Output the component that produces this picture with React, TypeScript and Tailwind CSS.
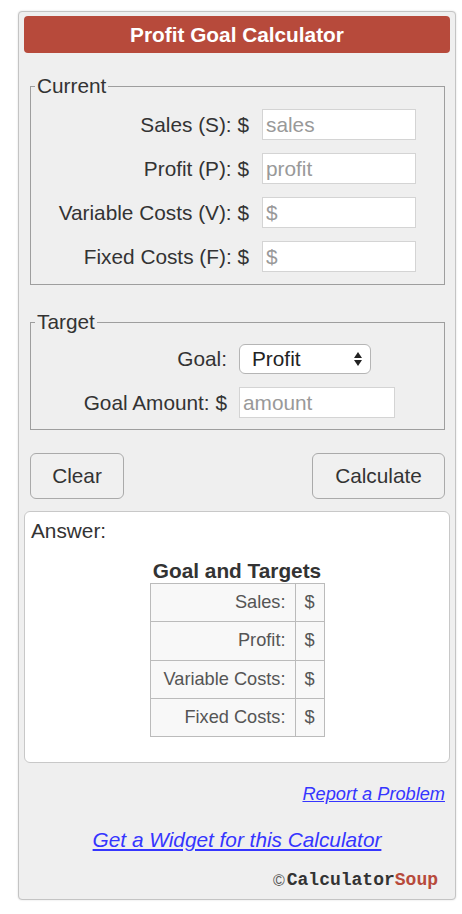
import React from "react";

const font = { fontFamily: '"Liberation Sans", Arial, Helvetica, sans-serif' };

function Row({ label, placeholder }: { label: string; placeholder: string }) {
  return (
    <>
      <label className="text-right text-[20.8px] leading-[31px] text-[#333] whitespace-nowrap">{label}</label>
      <input
        className="h-[31px] w-[154px] border border-[#d4d4d4] bg-white pl-[3px] text-[20.8px] text-[#333] placeholder:text-[#999] outline-none"
        placeholder={placeholder}
      />
    </>
  );
}

export default function App() {
  return (
    <div className="min-h-screen bg-white pt-[11px] pl-[18px]" style={font}>
      <div className="flex h-[889px] w-[438px] flex-col rounded-[4px] border border-[#c4c4c4] bg-[#efefef] px-[5px] pt-[4px] shadow-[0_0_2px_rgba(0,0,0,0.15)]">
        <div className="flex h-[37px] items-center justify-center rounded-[4px] bg-[#b74a3b] text-[20.8px] font-bold text-white">
          Profit Goal Calculator
        </div>

        <fieldset className="mx-[6px] mr-[5px] mt-[22px] border border-[#9e9e9e] pb-[12px] pl-[4px] pr-[28px]">
          <legend className="px-[2px] text-[20.8px] leading-[22px] text-[#333]">Current</legend>
          <div className="mt-[12px] grid grid-cols-[1fr_154px] items-center gap-x-[13px] gap-y-[13px]">
            <Row label="Sales (S): $" placeholder="sales" />
            <Row label="Profit (P): $" placeholder="profit" />
            <Row label="Variable Costs (V): $" placeholder="$" />
            <Row label="Fixed Costs (F): $" placeholder="$" />
          </div>
        </fieldset>

        <fieldset className="mx-[6px] mr-[5px] mt-[26px] border border-[#9e9e9e] pb-[11px] pl-[4px] pr-[49px]">
          <legend className="px-[2px] text-[20.8px] leading-[22px] text-[#333]">Target</legend>
          <div className="mt-[11px] grid grid-cols-[1fr_156px] items-center gap-x-[12px] gap-y-[13px]">
            <label className="text-right text-[20.8px] leading-[30px] text-[#333]">Goal:</label>
            <div className="flex h-[30px] w-[132px] items-center justify-between rounded-[6px] border border-[#b5b5b5] bg-white pl-[12px] pr-[8px]">
              <span className="text-[20.8px] text-[#222]">Profit</span>
              <svg width="8" height="15" viewBox="0 0 8 15">
                <path d="M4 0 L8 6 L0 6 Z" fill="#222" />
                <path d="M0 8 L8 8 L4 14 Z" fill="#222" />
              </svg>
            </div>
            <label className="text-right text-[20.8px] leading-[31px] text-[#333] whitespace-nowrap">Goal Amount: $</label>
            <input
              className="h-[31px] w-[156px] border border-[#d4d4d4] bg-white pl-[3px] text-[20.8px] text-[#333] placeholder:text-[#999] outline-none"
              placeholder="amount"
            />
          </div>
        </fieldset>

        <div className="mx-[6px] mr-[5px] mt-[23px] flex justify-between">
          <button className="h-[46px] w-[94px] rounded-[6px] border border-[#aaa] bg-[#f0f0f0] text-[20.8px] text-[#333]">
            Clear
          </button>
          <button className="h-[46px] w-[133px] rounded-[6px] border border-[#aaa] bg-[#f0f0f0] text-[20.8px] text-[#333]">
            Calculate
          </button>
        </div>

        <div className="mt-[12px] flex h-[252px] flex-col rounded-[6px] border border-[#c8c8c8] bg-white pl-[6px] pt-[8px]">
          <div className="text-[20.8px] leading-[22px] text-[#333]">Answer:</div>
          <div className="mt-[19px] flex flex-col items-center pr-[6px]">
            <div className="text-[20.8px] font-bold leading-[20px] text-[#333]">Goal and Targets</div>
            <table className="mt-[2px] border-collapse border border-[#bbb] bg-[#f8f8f8] text-[18.2px] text-[#555]">
              <tbody>
                {["Sales:", "Profit:", "Variable Costs:", "Fixed Costs:"].map((t) => (
                  <tr key={t} className="h-[38.3px]">
                    <td className="w-[145px] border border-[#bbb] pr-[9px] text-right">{t}</td>
                    <td className="w-[29px] border border-[#bbb] text-center">$</td>
                  </tr>
                ))}
              </tbody>
            </table>
          </div>
        </div>

        <div className="mr-[5px] mt-[20px] text-right">
          <a href="#" className="text-[18.2px] italic leading-[21px] text-[#3535ff] underline">
            Report a Problem
          </a>
        </div>

        <div className="mt-[21px] text-center">
          <a href="#" className="text-[20.8px] italic leading-[24px] text-[#3535ff] underline">
            Get a Widget for this Calculator
          </a>
        </div>

        <div className="mr-[12px] mt-[16px] flex items-center justify-end font-bold leading-[21px]" style={{ fontFamily: '"Liberation Mono", "Courier New", monospace' }}>
          <span className="mr-[2px] text-[16px] font-normal text-[#555]" style={font}>©</span>
          <span className="text-[18px] text-[#333]">Calculator</span>
          <span className="text-[18px] text-[#b74a3b]">Soup</span>
        </div>
      </div>
    </div>
  );
}
